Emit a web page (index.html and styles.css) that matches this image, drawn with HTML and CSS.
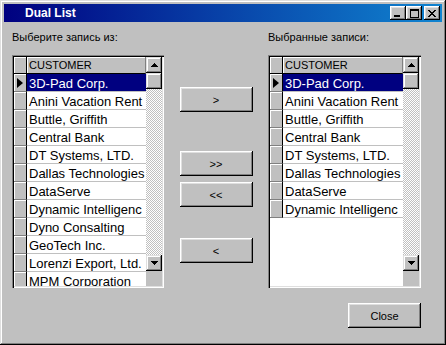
FILE: index.html
```html
<!DOCTYPE html>
<html lang="ru">

<head>
    <meta charset="UTF-8">
    <title>Dual List</title>
    <link rel="stylesheet" href="styles.css">
</head>

<body>
    <div class="window">
        <div class="titlebar">
            <span class="title">Dual List</span>
            <div class="title-btns">
                <div class="tbtn">
                    <svg width="6" height="2" shape-rendering="crispEdges"><rect x="0" y="0" width="6" height="2" /></svg>
                </div>
                <div class="tbtn">
                    <svg width="9" height="9" shape-rendering="crispEdges"><path d="M0 0h9v9H0z M1 2v6h7V2z" fill-rule="evenodd" /></svg>
                </div>
                <div class="tbtn close">
                    <svg width="8" height="7" shape-rendering="crispEdges">
                        <rect x="0" y="0" width="2" height="1" /><rect x="6" y="0" width="2" height="1" />
                        <rect x="1" y="1" width="2" height="1" /><rect x="5" y="1" width="2" height="1" />
                        <rect x="2" y="2" width="4" height="1" />
                        <rect x="3" y="3" width="2" height="1" />
                        <rect x="2" y="4" width="4" height="1" />
                        <rect x="1" y="5" width="2" height="1" /><rect x="5" y="5" width="2" height="1" />
                        <rect x="0" y="6" width="2" height="1" /><rect x="6" y="6" width="2" height="1" />
                    </svg>
                </div>
            </div>
        </div>

        <div class="dialog">
            <div class="panel">
                <div class="label">Выберите запись из:</div>
                <div class="grid">
                    <div class="table">
                        <div class="row head"><div class="ind"></div><div class="cell">CUSTOMER</div></div>
                        <div class="row current"><div class="ind"><span class="arrow"></span></div><div class="cell">3D-Pad Corp.</div></div>
                        <div class="row"><div class="ind"></div><div class="cell">Anini Vacation Rent</div></div>
                        <div class="row"><div class="ind"></div><div class="cell">Buttle, Griffith</div></div>
                        <div class="row"><div class="ind"></div><div class="cell">Central Bank</div></div>
                        <div class="row"><div class="ind"></div><div class="cell">DT Systems, LTD.</div></div>
                        <div class="row"><div class="ind"></div><div class="cell">Dallas Technologies</div></div>
                        <div class="row"><div class="ind"></div><div class="cell">DataServe</div></div>
                        <div class="row"><div class="ind"></div><div class="cell">Dynamic Intelligenc</div></div>
                        <div class="row"><div class="ind"></div><div class="cell">Dyno Consalting</div></div>
                        <div class="row"><div class="ind"></div><div class="cell">GeoTech Inc.</div></div>
                        <div class="row"><div class="ind"></div><div class="cell">Lorenzi Export, Ltd.</div></div>
                        <div class="row"><div class="ind"></div><div class="cell">MPM Corporation</div></div>
                    </div>
                    <div class="vscroll">
                        <div class="sb-btn">
                            <svg width="7" height="4" shape-rendering="crispEdges"><path d="M3 0h1v1h1v1h1v1h1v1H0V3h1V2h1V1h1z" /></svg>
                        </div>
                        <div class="sb-btn thumb"></div>
                        <div class="track"></div>
                        <div class="sb-btn">
                            <svg width="7" height="4" shape-rendering="crispEdges"><path d="M0 0h7v1H6v1H5v1H4v1H3V3H2V2H1V1H0z" /></svg>
                        </div>
                        <div class="corner"></div>
                    </div>
                </div>
            </div>

            <div class="moves">
                <button class="btn">&gt;</button>
                <button class="btn all">&gt;&gt;</button>
                <button class="btn back-all">&lt;&lt;</button>
                <button class="btn back">&lt;</button>
            </div>

            <div class="panel">
                <div class="label">Выбранные записи:</div>
                <div class="grid">
                    <div class="table">
                        <div class="row head"><div class="ind"></div><div class="cell">CUSTOMER</div></div>
                        <div class="row current"><div class="ind"><span class="arrow"></span></div><div class="cell">3D-Pad Corp.</div></div>
                        <div class="row"><div class="ind"></div><div class="cell">Anini Vacation Rent</div></div>
                        <div class="row"><div class="ind"></div><div class="cell">Buttle, Griffith</div></div>
                        <div class="row"><div class="ind"></div><div class="cell">Central Bank</div></div>
                        <div class="row"><div class="ind"></div><div class="cell">DT Systems, LTD.</div></div>
                        <div class="row"><div class="ind"></div><div class="cell">Dallas Technologies</div></div>
                        <div class="row"><div class="ind"></div><div class="cell">DataServe</div></div>
                        <div class="row"><div class="ind"></div><div class="cell">Dynamic Intelligenc</div></div>
                    </div>
                    <div class="vscroll">
                        <div class="sb-btn">
                            <svg width="7" height="4" shape-rendering="crispEdges"><path d="M3 0h1v1h1v1h1v1h1v1H0V3h1V2h1V1h1z" /></svg>
                        </div>
                        <div class="sb-btn thumb"></div>
                        <div class="track"></div>
                        <div class="sb-btn">
                            <svg width="7" height="4" shape-rendering="crispEdges"><path d="M0 0h7v1H6v1H5v1H4v1H3V3H2V2H1V1H0z" /></svg>
                        </div>
                        <div class="corner"></div>
                    </div>
                </div>
            </div>

            <div class="footer">
                <button class="btn">Close</button>
            </div>
        </div>
    </div>
</body>

</html>
```

FILE: styles.css
```css
* {
    box-sizing: border-box;
}

body {
    margin: 0;
    background-color: #c0c0c0;
    font-family: "Liberation Sans", Arial, sans-serif;
    color: #000;
}

.window {
    width: 446px;
    height: 345px;
    padding: 4px;
    background-color: #c0c0c0;
    box-shadow: inset -1px -1px #000, inset 1px 1px #dfdfdf,
        inset -2px -2px #808080, inset 2px 2px #fff;
}

/* title bar */
.titlebar {
    height: 18px;
    display: flex;
    align-items: center;
    justify-content: space-between;
    padding: 0 2px 0 21px;
    background: linear-gradient(to right, #000080, #1084d0);
}

.title {
    color: #fff;
    font-size: 12px;
    font-weight: bold;
}

.title-btns {
    display: flex;
}

.tbtn {
    width: 16px;
    height: 14px;
    display: flex;
    align-items: center;
    justify-content: center;
    background-color: #c0c0c0;
    box-shadow: inset -1px -1px #000, inset 1px 1px #fff,
        inset -2px -2px #808080, inset 2px 2px #dfdfdf;
}

.tbtn:first-child svg {
    margin: 5px 3px 0 0;
}

.tbtn.close {
    margin-left: 2px;
}

/* dialog body */
.dialog {
    display: grid;
    grid-template-columns: 152px 1fr 153px;
    padding: 9px 21px 0 8px;
}

.label {
    font-size: 11px;
    line-height: 13px;
    margin-bottom: 11px;
}

.grid {
    height: 233px;
    display: flex;
    padding: 2px;
    background-color: #c0c0c0;
    box-shadow: inset 1px 1px #808080, inset 2px 2px #000,
        inset -1px -1px #fff, inset -2px -2px #dfdfdf;
}

.table {
    flex: 1;
    overflow: hidden;
    background-color: #fff;
}

.row {
    display: flex;
    height: 18px;
}

.ind {
    width: 13px;
    flex-shrink: 0;
    display: flex;
    align-items: center;
    background-color: #c0c0c0;
    border-right: 1px solid #000;
    border-bottom: 1px solid #808080;
    box-shadow: inset 1px 1px #fff;
}

.arrow {
    width: 0;
    height: 0;
    margin-left: 3px;
    border-top: 5px solid transparent;
    border-bottom: 5px solid transparent;
    border-left: 6px solid #000;
}

.cell {
    flex: 1;
    padding: 2px 0 0 2px;
    font-size: 13px;
    line-height: 15px;
    white-space: nowrap;
    overflow: hidden;
    border-bottom: 1px solid #c0c0c0;
}

.row.head {
    height: 17px;
}

.row.head .ind,
.row.head .cell {
    background-color: #c0c0c0;
    border-bottom: 1px solid #000;
}

.row.head .cell {
    padding-top: 1px;
    font-size: 11px;
    line-height: 15px;
    border-right: 1px solid #808080;
    box-shadow: inset 1px 1px #fff;
}

.row.current .cell {
    background-color: #000080;
    color: #fff;
}

/* scrollbar */
.vscroll {
    width: 16px;
    display: flex;
    flex-direction: column;
}

.sb-btn {
    height: 16px;
    flex-shrink: 0;
    display: flex;
    align-items: center;
    justify-content: center;
    background-color: #c0c0c0;
    box-shadow: inset -1px -1px #000, inset 1px 1px #dfdfdf,
        inset -2px -2px #808080, inset 2px 2px #fff;
}

.track {
    flex: 1;
    background: repeating-conic-gradient(#c0c0c0 0 25%, #fff 0 50%) 0 0 / 2px 2px;
}

.corner {
    height: 15px;
    flex-shrink: 0;
    background-color: #c0c0c0;
}

/* buttons */
.btn {
    width: 73px;
    height: 25px;
    padding: 0;
    border: none;
    background-color: #c0c0c0;
    font-family: "Liberation Sans", Arial, sans-serif;
    font-size: 11px;
    color: #000;
    box-shadow: inset -1px -1px #000, inset 1px 1px #fff,
        inset -2px -2px #808080, inset 2px 2px #dfdfdf;
}

.moves {
    display: flex;
    flex-direction: column;
    align-items: center;
    padding-top: 56px;
}

.moves .all {
    margin-top: 39px;
}

.moves .back-all {
    margin-top: 6px;
}

.moves .back {
    margin-top: 31px;
}

.footer {
    grid-column: 3;
    display: flex;
    justify-content: flex-end;
    margin-top: 15px;
}
```
